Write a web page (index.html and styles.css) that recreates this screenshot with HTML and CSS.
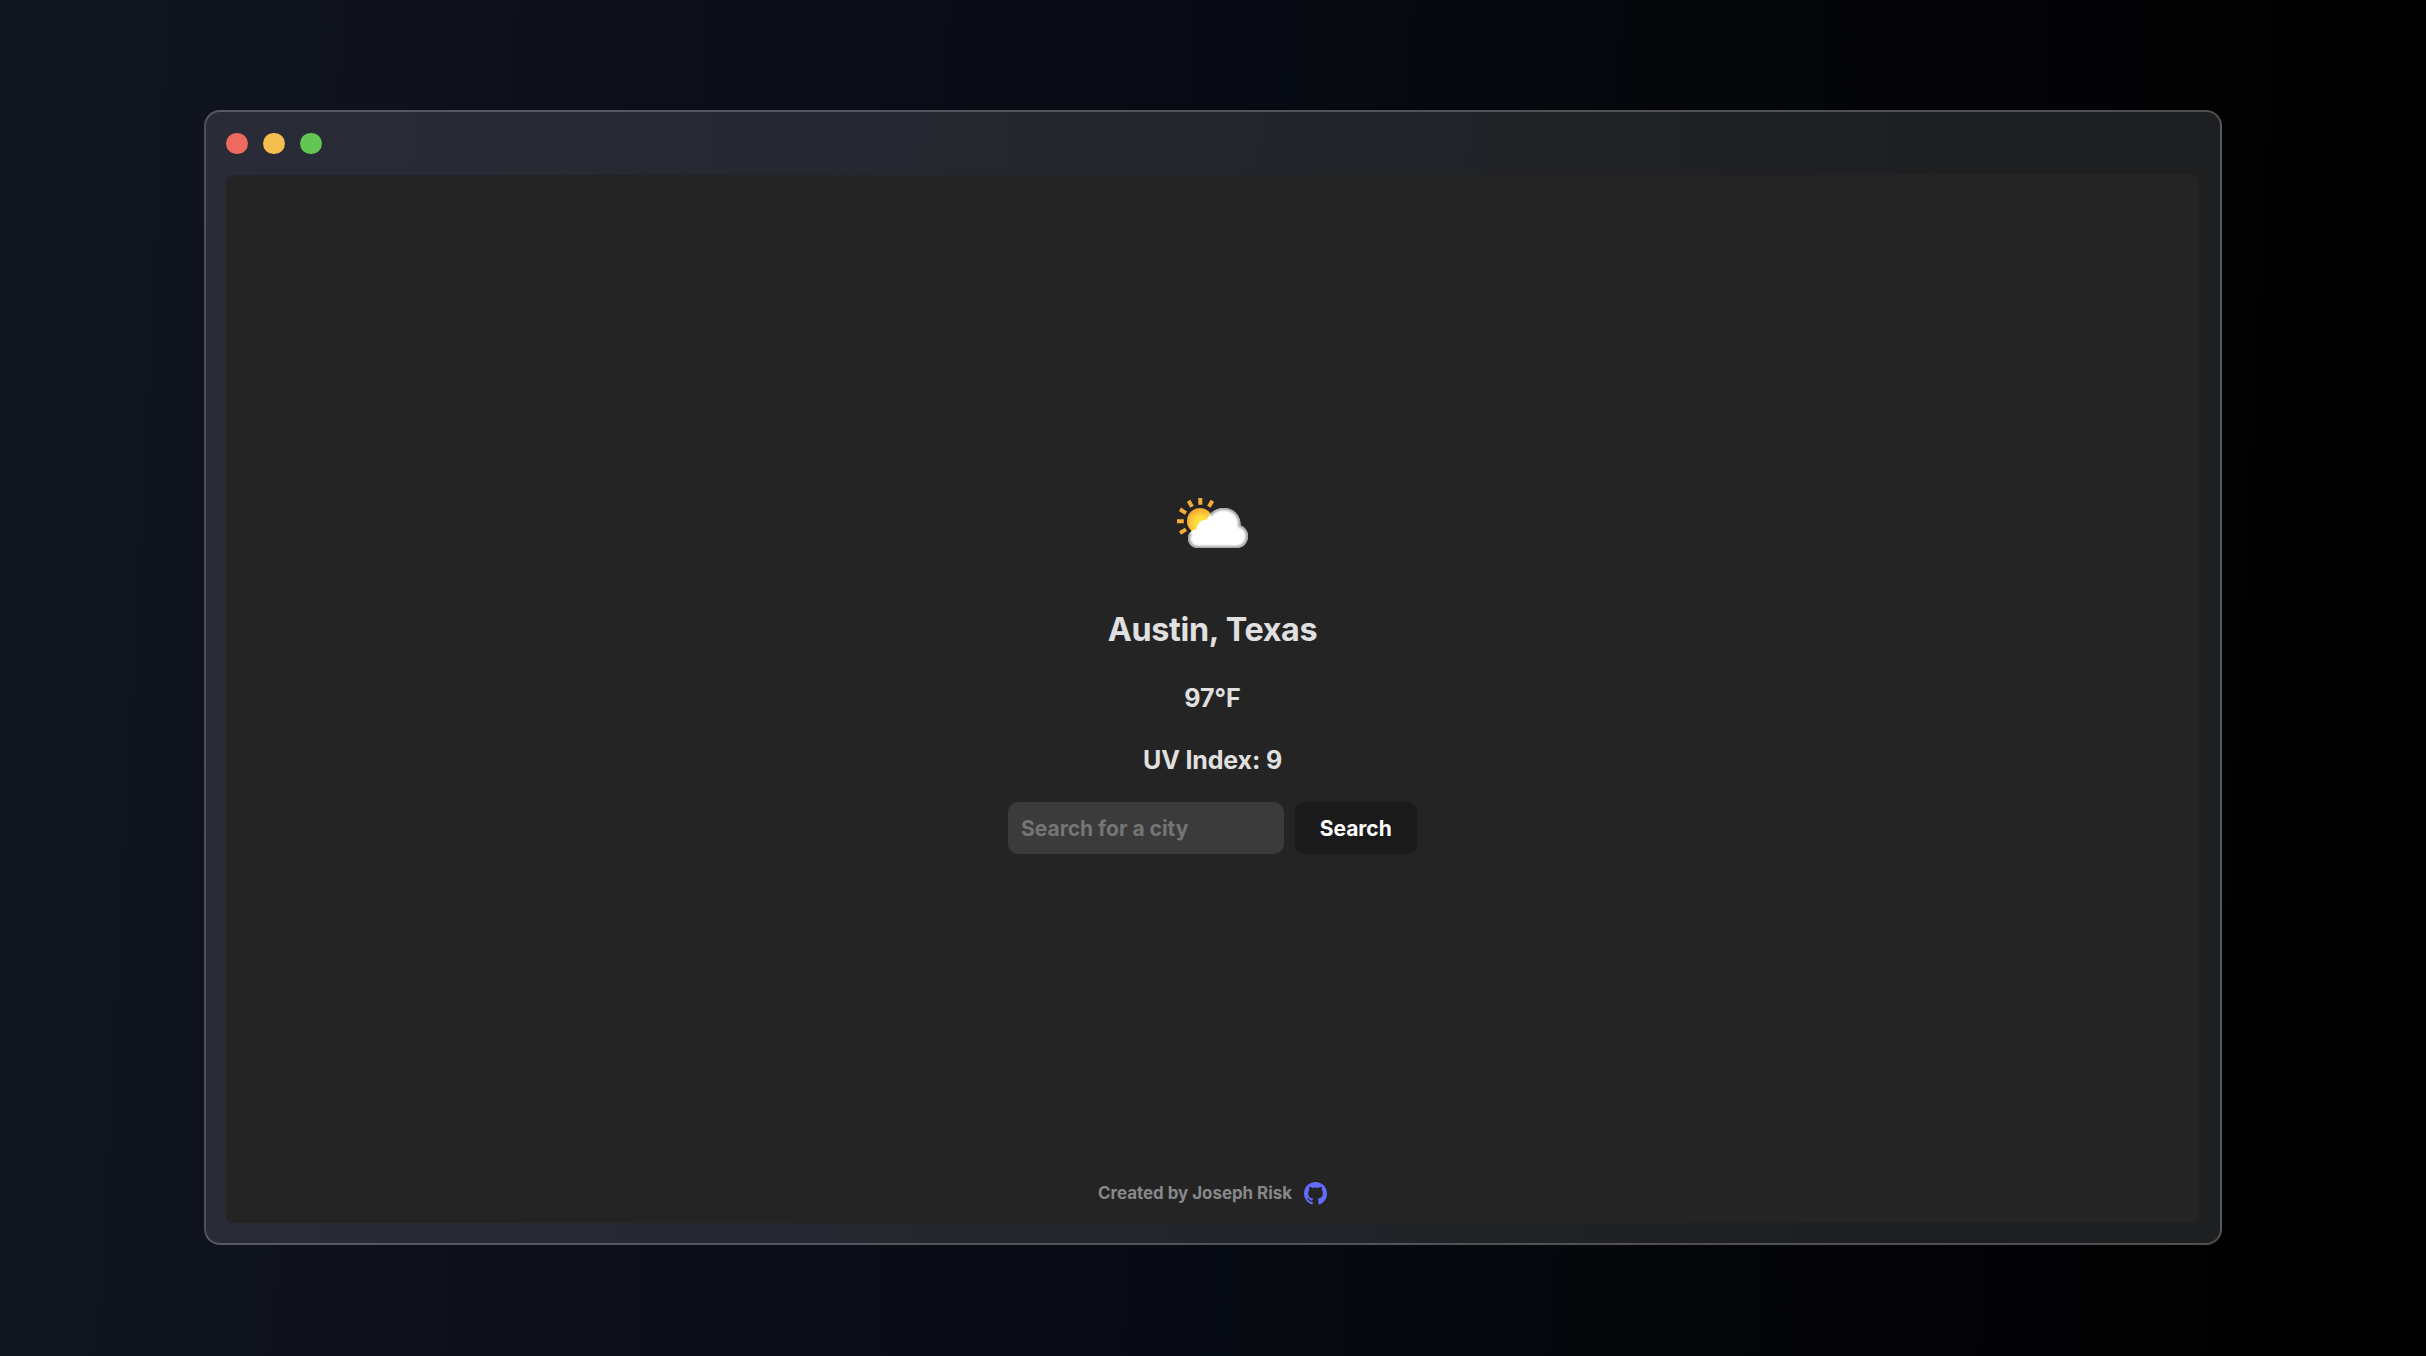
FILE: index.html
```html
<!DOCTYPE html>
<html lang="en">
<head>
<meta charset="utf-8">
<title>Weather</title>
<link rel="stylesheet" href="styles.css">
</head>
<body>
<div class="window">
  <div class="titlebar">
    <span class="dot dot-close"></span>
    <span class="dot dot-minimize"></span>
    <span class="dot dot-expand"></span>
  </div>
  <div class="app">
    <main class="weather">
      <svg class="weather-icon" viewBox="0 0 110 80" aria-hidden="true">
        <defs>
          <radialGradient id="sun" cx="0.55" cy="0.6" r="0.6">
            <stop offset="0" stop-color="#ffee3c"/>
            <stop offset="0.5" stop-color="#fdd63c"/>
            <stop offset="1" stop-color="#f3a62f"/>
          </radialGradient>
          <clipPath id="cloud"><path d="M38 68C32 68 28 63.5 28 58.5C28 53 32 49.7 36.5 49.3C37 43.5 41 39.5 47 39.5C50 32 56 28 64 28C74 28 81 36 80.5 45.5C85 47 88 51 88 56C88 63 83 68 77 68Z"/></clipPath>
          <filter id="soft" x="-20%" y="-20%" width="140%" height="140%"><feGaussianBlur stdDeviation="1.1"/></filter>
        </defs>
        <circle cx="40" cy="41" r="13" fill="url(#sun)"/>
        <g stroke="#f3ad38" stroke-width="4" stroke-linecap="butt">
          <path d="M40.3 18v6.7M28.6 20.8l3.4 6M52.4 20.8l-3.5 6M20 29.3l6 3.8M17 41.2h6.8M20 53l6-3.6"/>
        </g>
        <path fill="#fff" d="M38 68C32 68 28 63.5 28 58.5C28 53 32 49.7 36.5 49.3C37 43.5 41 39.5 47 39.5C50 32 56 28 64 28C74 28 81 36 80.5 45.5C85 47 88 51 88 56C88 63 83 68 77 68Z"/>
        <g clip-path="url(#cloud)"><path filter="url(#soft)" fill="none" stroke="#a0a0a3" stroke-width="4.2" d="M50 35C53 30 58 28 64 28C74 28 81 36 80.5 45.5C85 47 88 51 88 56C88 63 83 68 77 68H38C32 68 28 63.5 28 58.5C28 56 29 54 30 52.5"/></g>
      </svg>
      <h1 class="city">Austin, Texas</h1>
      <p class="reading">97°F</p>
      <p class="reading reading-uv">UV Index: 9</p>
      <form class="search">
        <input class="search-input" type="text" placeholder="Search for a city">
        <button class="search-button" type="button">Search</button>
      </form>
    </main>
    <footer class="credit">
      <span>Created by Joseph Risk</span>
      <svg class="github" viewBox="0 0 16 16" aria-hidden="true"><path d="M8 0C3.58 0 0 3.58 0 8c0 3.54 2.29 6.53 5.47 7.59.4.07.55-.17.55-.38 0-.19-.01-.82-.01-1.49-2.01.37-2.53-.49-2.69-.94-.09-.23-.48-.94-.82-1.13-.28-.15-.68-.52-.01-.53.63-.01 1.08.58 1.23.82.72 1.21 1.87.87 2.33.66.07-.52.28-.87.51-1.07-1.78-.2-3.64-.89-3.64-3.95 0-.87.31-1.59.82-2.15-.08-.2-.36-1.02.08-2.12 0 0 .67-.21 2.2.82.64-.18 1.32-.27 2-.27s1.36.09 2 .27c1.53-1.04 2.2-.82 2.2-.82.44 1.1.16 1.92.08 2.12.51.56.82 1.27.82 2.15 0 3.07-1.87 3.75-3.65 3.95.29.25.54.73.54 1.48 0 1.07-.01 1.93-.01 2.2 0 .21.15.46.55.38A8.01 8.01 0 0 0 16 8c0-4.42-3.58-8-8-8z"/></svg>
    </footer>
  </div>
</div>
</body>
</html>
```

FILE: styles.css
```css
* {
  box-sizing: border-box;
}

body {
  margin: 0;
  height: 1356px;
  padding: 110px 204px 111px;
  overflow: hidden;
  font-family: Inter, sans-serif;
  font-weight: 700;
  color: #e0e0e0;
  background: linear-gradient(93deg, #111620 0%, #0c0f1a 26%, #060a12 52%, #040508 74%, #000 98%);
}

.window {
  height: 1135px;
  padding: 0 21px 20px 20px;
  display: flex;
  flex-direction: column;
  border: 2px solid rgba(255, 255, 255, 0.22);
  border-radius: 16px;
  background: linear-gradient(95deg, #292c37 0%, #23262d 45%, #1e1f21 82%, #1e1f21 100%);
}

.titlebar {
  height: 63px;
  display: flex;
  align-items: center;
  gap: 15.5px;
}

.dot {
  width: 21.5px;
  height: 21.5px;
  border-radius: 50%;
}

.dot-close { background: #ed6a5f; }
.dot-minimize { background: #f5bf50; }
.dot-expand { background: #62c655; }

.app {
  flex: 1;
  display: flex;
  flex-direction: column;
  justify-content: space-between;
  align-items: center;
  padding: 305px 0 16px;
  border-radius: 7px;
  background: #242424;
}

.weather {
  display: flex;
  flex-direction: column;
  align-items: center;
}

.weather-icon {
  width: 110px;
  height: 80px;
  margin-left: 4px;
}

.city {
  margin: 49px 0 0;
  font-size: 32.3px;
  line-height: 41px;
  letter-spacing: -0.3px;
}

.reading {
  margin: 33px 0 0;
  font-size: 25px;
  line-height: 30px;
}

.reading-uv {
  margin-top: 32px;
  letter-spacing: -0.15px;
}

.search {
  display: flex;
  gap: 11px;
  margin-top: 27px;
}

.search-input,
.search-button {
  height: 51.5px;
  border: 0;
  border-radius: 10px;
  font: 700 21px Inter, sans-serif;
}

.search-input {
  width: 275.5px;
  padding: 2px 13px 0;
  background: #3b3b3b;
  color: #fff;
}

.search-input::placeholder {
  color: #757575;
}

.search-button {
  width: 122.5px;
  padding: 2px 0 0;
  background: #1a1a1a;
  color: #fff;
}

.credit {
  display: flex;
  align-items: center;
  gap: 12px;
  font-size: 16.9px;
  line-height: 28px;
  color: #888;
}

.github {
  width: 23px;
  height: 23px;
  fill: #646cff;
}
```
